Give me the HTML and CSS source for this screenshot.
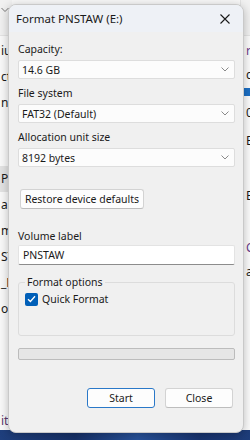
FILE: index.html
```html
<!DOCTYPE html>
<html lang="en">
<head>
  <meta charset="UTF-8">
  <title>Format PNSTAW (E:)</title>
  <link rel="stylesheet" href="styles.css">
</head>
<body>

<div class="desktop">

  <!-- explorer windows behind the dialog -->
  <div class="back back-left">
    <div class="back-top">
      <svg class="back-chev" width="8" height="6" viewBox="0 0 8 6"><path d="M0.5 1 L4 4.5 L7.5 1" fill="none" stroke="#777" stroke-width="1"/></svg>
    </div>
    <ul class="back-list">
      <li>iu</li>
      <li>ct</li>
      <li>n</li>
      <li class="empty"></li>
      <li class="empty"></li>
      <li class="selected">PC</li>
      <li>al</li>
      <li>m</li>
      <li>ST</li>
      <li>_N</li>
      <li>o</li>
    </ul>
    <div class="back-foot">it</div>
  </div>

  <div class="back back-right">
    <div class="back-top"></div>
    <ul class="right-list">
      <li class="link">r</li>
      <li>c</li>
      <li class="bar"></li>
      <li>0</li>
      <li class="b1">B</li>
      <li class="b2">B</li>
      <li class="link c1">C</li>
      <li>a</li>
    </ul>
  </div>

  <div class="wallpaper"></div>

  <!-- format dialog -->
  <div class="dialog">
    <div class="titlebar">
      <span class="title">Format PNSTAW (E:)</span>
      <svg class="close" width="10" height="10" viewBox="0 0 10 10"><path d="M0.5 0.5 L9.5 9.5 M9.5 0.5 L0.5 9.5" stroke="#1a1a1a" stroke-width="1.1"/></svg>
    </div>

    <div class="content">
      <div class="field">
        <label>Capacity:</label>
        <div class="select">
          <span>14.6 GB</span>
          <svg width="8" height="5" viewBox="0 0 8 5"><path d="M0.5 0.5 L4 4 L7.5 0.5" fill="none" stroke="#8a8a8a" stroke-width="1"/></svg>
        </div>
      </div>

      <div class="field">
        <label>File system</label>
        <div class="select">
          <span>FAT32 (Default)</span>
          <svg width="8" height="5" viewBox="0 0 8 5"><path d="M0.5 0.5 L4 4 L7.5 0.5" fill="none" stroke="#8a8a8a" stroke-width="1"/></svg>
        </div>
      </div>

      <div class="field">
        <label>Allocation unit size</label>
        <div class="select">
          <span>8192 bytes</span>
          <svg width="8" height="5" viewBox="0 0 8 5"><path d="M0.5 0.5 L4 4 L7.5 0.5" fill="none" stroke="#8a8a8a" stroke-width="1"/></svg>
        </div>
      </div>

      <button class="btn restore">Restore device defaults</button>

      <div class="field volume">
        <label>Volume label</label>
        <div class="textbox">PNSTAW</div>
      </div>

      <fieldset class="group">
        <legend>Format options</legend>
        <div class="check">
          <span class="box">
            <svg width="9" height="8" viewBox="0 0 9 8"><path d="M1 4.2 L3.4 6.5 L8 1.2" fill="none" stroke="#fff" stroke-width="1.3"/></svg>
          </span>
          <span>Quick Format</span>
        </div>
      </fieldset>

      <div class="progress"></div>

      <div class="actions">
        <button class="btn primary">Start</button>
        <button class="btn">Close</button>
      </div>
    </div>
  </div>

</div>

</body>
</html>
```

FILE: styles.css
```css
/* General Styles */
* {
  box-sizing: border-box;
}

body {
  margin: 0;
  font-family: "Noto Sans", "Open Sans", sans-serif;
  font-size: 10.5px;
  color: #1a1a1a;
}

.desktop {
  position: relative;
  width: 250px;
  height: 440px;
  overflow: hidden;
  background: #f7f7f7;
}

/* Windows behind */
.back {
  position: absolute;
  top: 0;
  height: 434px;
  background: #f9f9f9;
  font-size: 12px;
}

.back-left {
  left: 0;
  width: 12px;
  overflow: hidden;
}

.back-right {
  left: 240px;
  width: 60px;
  background: #fbfbfb;
  border-left: 1px solid #e2e2e2;
}

.back-top {
  height: 36px;
  background: #f1f1f1;
  border-bottom: 1px solid #e4e4e4;
  padding: 7px 0 0 1px;
}

.back-chev {
  display: block;
}

.back-list {
  list-style: none;
  margin: 0;
  padding: 2px 0 0 0;
}

.back-list li {
  height: 26px;
  line-height: 26px;
  padding-left: 1px;
  white-space: nowrap;
}

.back-list li.empty {
  height: 25px;
}

.back-list li.selected {
  background: #e3e3e3;
}

.back-foot {
  margin-top: 90px;
  color: #5a3a6e;
  padding-left: 1px;
}

.right-list {
  list-style: none;
  margin: 0;
  padding: 8px 0 0 5px;
}

.right-list li {
  height: 14px;
  line-height: 14px;
  margin-top: 10px;
}

.right-list li:first-child {
  margin-top: 0;
}

.right-list li.link {
  color: #6a3d8c;
}

.right-list li.bar {
  height: 8px;
  margin: 6px 0 0 -5px;
  background: #1c6fc4;
}

.right-list li.b1 {
  margin-top: 14px;
}

.right-list li.b2 {
  margin-top: 41px;
}

.right-list li.c1 {
  margin-top: 38px;
}

.wallpaper {
  position: absolute;
  left: 0;
  right: 0;
  bottom: 0;
  height: 10px;
  background: linear-gradient(90deg, #1f3f7d 0%, #173169 30%, #28529a 55%, #183470 80%, #1e3d7a 100%);
}

/* Dialog */
.dialog {
  position: absolute;
  left: 8px;
  top: 4px;
  width: 236px;
  height: 429px;
  background: #f0f0f0;
  border: 1px solid #c9c9c9;
  border-radius: 8px;
  box-shadow: 0 2px 10px rgba(0, 0, 0, 0.25);
  overflow: hidden;
}

.titlebar {
  height: 27px;
  background: #eef1f6;
  display: flex;
  align-items: center;
  justify-content: space-between;
  padding: 0 13px 0 7px;
}

.title {
  font-size: 11.5px;
  color: #1a1a1a;
}

.close {
  display: block;
}

.content {
  padding: 9px 8px 0 9px;
}

.field {
  margin-bottom: 6px;
}

label {
  display: block;
  line-height: 16px;
  margin-bottom: 3px;
}

.select {
  height: 19px;
  background: #fcfcfc;
  border: 1px solid #dddddd;
  border-radius: 2px;
  display: flex;
  align-items: center;
  justify-content: space-between;
  padding: 0 5px 0 3px;
}

.select svg {
  display: block;
}

.btn {
  font-family: inherit;
  font-size: 10.5px;
  color: #1a1a1a;
  background: #fdfdfd;
  border: 1px solid #d3d3d3;
  border-bottom-color: #bdbdbd;
  border-radius: 3px;
  height: 20px;
  padding: 0;
}

.restore {
  display: block;
  width: 124px;
  margin: 22px 0 0 2px;
}

.volume {
  margin-top: 19px;
  margin-bottom: 0;
}

.volume label {
  margin-bottom: 1px;
}

.textbox {
  height: 20px;
  line-height: 18px;
  background: #ffffff;
  border: 1px solid #e3e3e3;
  border-bottom-color: #8c8c8c;
  border-radius: 2px;
  padding-left: 4px;
}

.group {
  margin: 10px 0 0 0;
  padding: 3px 6px 0 6px;
  height: 61px;
  border: 1px solid #dcdcdc;
  border-radius: 3px;
}

.group legend {
  padding: 0 2px;
  line-height: 14px;
}

.check {
  display: flex;
  align-items: center;
  gap: 4px;
}

.box {
  width: 13px;
  height: 13px;
  background: #005fb8;
  border-radius: 2px;
  display: flex;
  align-items: center;
  justify-content: center;
}

.box svg {
  display: block;
}

.progress {
  margin-top: 12px;
  height: 12px;
  background: #e6e6e6;
  border: 1px solid #bcbcbc;
  border-radius: 2px;
}

.actions {
  display: flex;
  justify-content: flex-end;
  gap: 10px;
  margin: 28px 2px 0 0;
}

.actions .btn {
  width: 68px;
}

.btn.primary {
  border: 1px solid #2a78c8;
}
```
